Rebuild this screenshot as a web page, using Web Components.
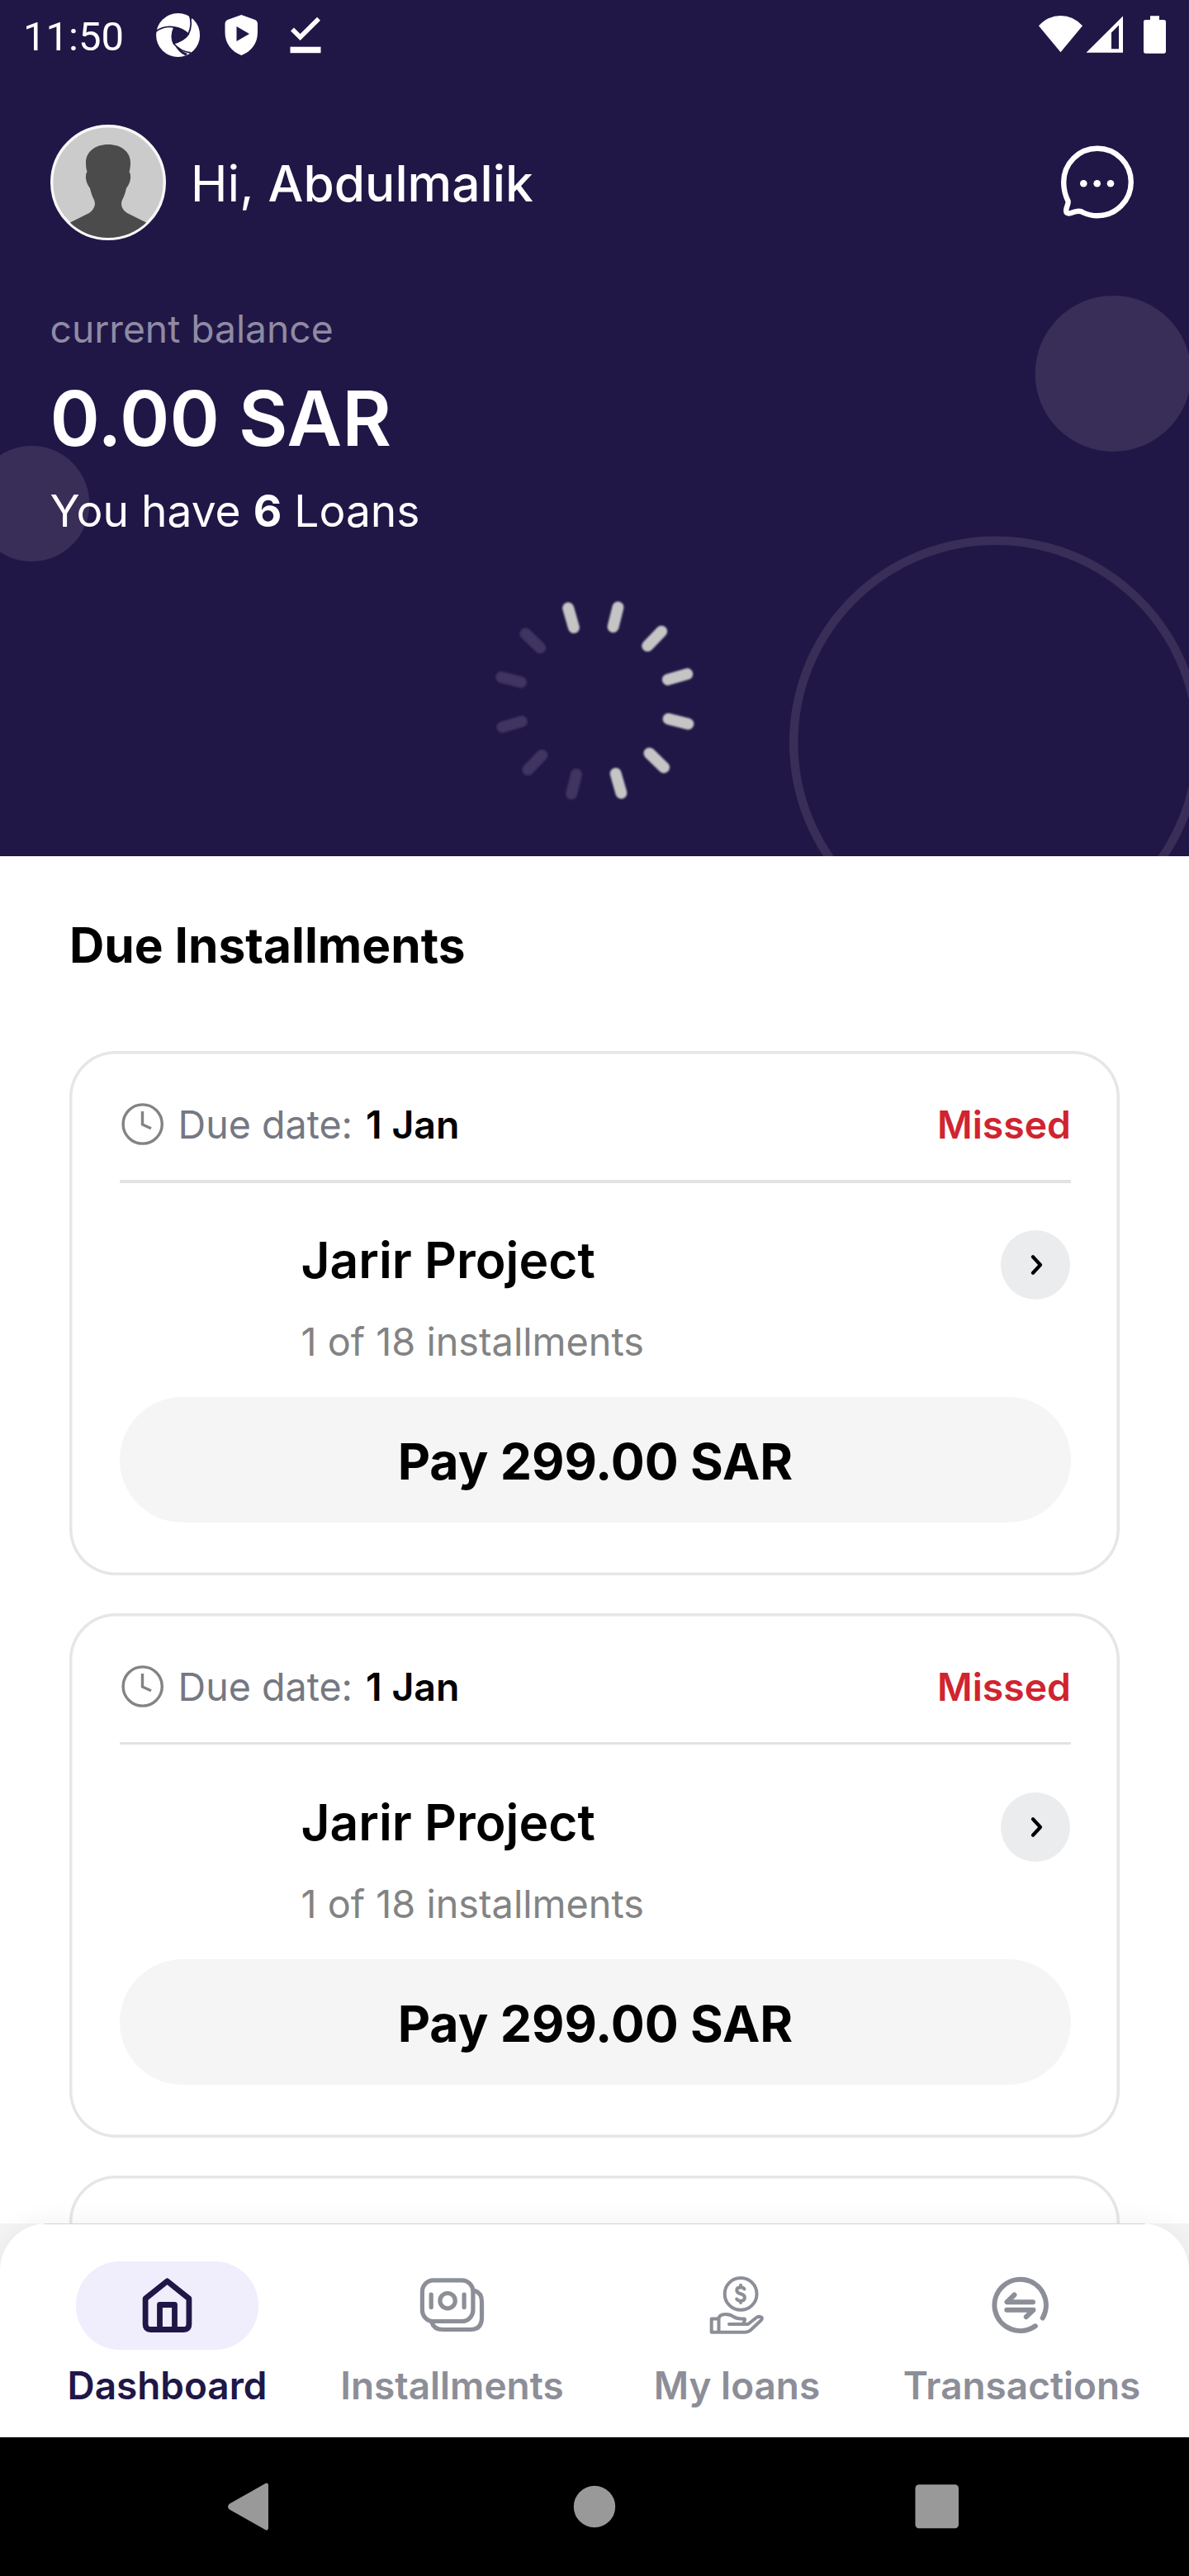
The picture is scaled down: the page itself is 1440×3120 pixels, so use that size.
<!DOCTYPE html>
<html lang="en">
<head>
<meta charset="utf-8">
<title>Dashboard</title>
<style>
html,body{margin:0;padding:0;background:#fff}
body{font-family:Inter,"Liberation Sans",sans-serif;color:#000}
</style>
</head>
<body>
<loan-app></loan-app>
<script>
const define = (name, html) => customElements.define(name, class extends HTMLElement {
  constructor() {
    super();
    const t = document.createElement('template');
    t.innerHTML = '<style>*{box-sizing:border-box}svg{display:block;flex:none}</style>' + html;
    this.attachShadow({ mode: 'open' }).appendChild(t.content.cloneNode(true));
  }
});

define('status-bar', `
<style>
:host{display:flex;height:84px;padding-left:28px;align-items:flex-start;color:#fff}
time{font:400 49px/90px Roboto,sans-serif;width:152px;white-space:nowrap}
.gap{flex:1}
</style>
<time>11:50</time>
<svg width="220" height="84" viewBox="180 0 220 84">
  <circle cx="215.6" cy="42.5" r="26.5" fill="#fff"/>
  <path d="M211 33 Q220 33 229 41 Q225 49 210.5 52.5 Q206 42 211 33Z" fill="#201747"/>
  <g fill="none" stroke="#201747" stroke-width="1.8">
    <path d="M188 38.5 Q199 30.5 211 33 Q222 35 228.5 42"/>
    <path d="M229 17 Q234 29 228 41.5"/>
    <path d="M211 33 Q206 44 210.5 53 Q218 62 231 64"/>
    <path d="M228.5 41 Q222 50 210 52.5"/>
  </g>
  <path d="M229 15 L232.5 21.5 L231.5 25Z M211 53 Q216 64 225 67.5 L227 65 Q217 61 211 53Z M230 64.2 L236 63 L233 67Z" fill="#201747"/>
  <path d="M292.3 18 L309 24 Q312 25.5 312 29 V39 C312 53 304 62.500 292.300 67 C280.500 62.500 272.500 53 272.500 39 V29 Q272.500 25.500 275.500 24Z" fill="#fff"/>
  <path d="M286.500 32 L302 41 L286.500 50Z" fill="#201747"/>
  <path d="M354 35.500 L363.600 45 L386 22.800" fill="none" stroke="#fff" stroke-width="5.600"/>
  <rect x="351.500" y="56.700" width="37" height="7.500" fill="#fff"/>
</svg>
<div class="gap"></div>
<svg width="190" height="84" viewBox="1250 0 190 84" fill="#fff">
  <path d="M1284.500 63.200 L1258 31.300 Q1269 19 1284.500 19 Q1300 19 1311 31.300Z"/>
  <path fill-rule="evenodd" d="M1315.500 63.700 L1360 19.500 V63.700Z M1346 39.500 V59.300 H1355 V30.500Z"/>
  <path d="M1393 19.300 H1404 V24 H1409.500 Q1412 24 1412 26.500 V62 Q1412 64.700 1409.500 64.700 H1387.500 Q1385 64.700 1385 62 V26.500 Q1385 24 1387.500 24 H1393Z"/>
</svg>`);

define('user-greeting', `
<style>
:host{display:flex;align-items:center;height:140px;margin:67px 60px 0 61px;color:#fff}
p{margin:2px 0 0 29.700px;font-size:60.400px;line-height:80px;flex:1;white-space:nowrap}
b{font-weight:500}
</style>
<svg width="140" height="140" viewBox="61 151 140 140">
  <defs><clipPath id="c"><circle cx="131" cy="221" r="67"/></clipPath></defs>
  <circle cx="131" cy="221" r="68.300" fill="#cbcbcb" stroke="#f7f7f7" stroke-width="3.400"/>
  <path clip-path="url(#c)" fill="#4b4b4b" d="M131 175 C115 175 104 184 104 197 Q104 204 105.500 208 Q103.500 210 104 216 Q104.500 222 109 228 Q110 233 112 238 Q115 243 115 247 Q114 254 108 258 Q98 263 84 270 V295 H178 V270 Q164 263 154 258 Q147.500 254 147 247 Q147 243 150 238 Q152 233 153 228 Q157.500 222 158 216 Q158.500 210 156.500 208 Q158 204 158 197 C158 184 147 175 131 175Z"/>
</svg>
<p>Hi, <b><slot></slot></b></p>
<svg width="95" height="95" viewBox="1285 173.500 95 95">
  <path d="M1293.500 243 C1290.500 237 1288.200 229 1288.200 220 A40.800 40.800 0 1 1 1329 260.800 C1322 260.800 1317 259.500 1312 257 C1308 254 1304 255 1300 256.500 C1295 258.500 1290.800 259 1291.200 254 C1291.500 250 1294.500 246 1293.500 243Z" fill="none" stroke="#fff" stroke-width="6.400" stroke-linejoin="round"/>
  <g fill="#fff"><circle cx="1312.300" cy="221.700" r="4.300"/><circle cx="1328.700" cy="221.700" r="4.300"/><circle cx="1345" cy="221.700" r="4.300"/></g>
</svg>`);

define('balance-summary', `
<style>
:host{display:block;margin:77px 60px 0 60.500px;color:#fff;white-space:nowrap}
p{margin:0}
.label{font-size:46.200px;line-height:60px;color:#8f8ba3}
.amount{font-size:91.600px;line-height:100px;font-weight:600;margin-top:29px}
.loans{font-size:53.300px;line-height:70px;margin-top:27px}
</style>
<p class="label">current balance</p>
<p class="amount">0.00 SAR</p>
<p class="loans">You have <b>6</b> Loans</p>`);

define('loading-spinner', `
<style>:host{display:flex;justify-content:center;margin-top:70px}g{filter:blur(.9px)}</style>
<svg width="250" height="250" viewBox="-125 -125 250 250"><g id="s"></g></svg>`);

define('dashboard-header', `
<style>
:host{display:block;position:relative;height:1037px;background:#201747;overflow:hidden}
.deco{position:absolute;left:0;top:0}
.front{position:relative}
</style>
<svg class="deco" width="1440" height="1037" viewBox="0 0 1440 1037">
  <g fill="#382e58"><circle cx="1348.200" cy="452.500" r="94.500"/><circle cx="38.300" cy="610" r="70"/></g>
  <circle cx="1206" cy="899.500" r="244.800" fill="none" stroke="#382e58" stroke-width="10.500"/>
</svg>
<div class="front">
  <status-bar></status-bar>
  <user-greeting>Abdulmalik</user-greeting>
  <balance-summary></balance-summary>
  <loading-spinner></loading-spinner>
</div>`);

define('installment-card', `
<style>
:host{display:block;height:635.250px;padding:50px 59px 0 61px;border-radius:56px;box-shadow:inset 0 0 0 3.500px #e6e6e6;white-space:nowrap}
:host([placeholder]) > *{display:none}
.due{display:flex;align-items:center;height:78px;font-size:46.600px;line-height:78px}
.due span{color:#757882;margin-left:16.500px}
.due b{font-weight:600;font-size:46.500px;margin-left:16px}
.due em{font-style:normal;font-weight:600;font-size:46.300px;color:#d02430;margin-left:auto}
hr{border:0;height:3.500px;margin:28px 0 0;background:#e3e3e3}
.body{display:flex;justify-content:space-between;align-items:flex-start;height:259.500px;padding:57.500px 1px 0 219.500px}
h3{margin:0;font-size:60.500px;line-height:72px;font-weight:600}
.body p{margin:33px 0 0;font-size:46.800px;line-height:60px;color:#838383}
button{display:block;width:100%;height:152px;padding:0;border:0;border-radius:76px;background:#f5f5f5;font:700 60.800px/156px Inter,sans-serif;color:#000}
</style>
<div class="due">
  <svg width="54" height="54" viewBox="145.500 1334.500 54 54" fill="none" stroke="#838383" stroke-width="3.400"><circle cx="173.200" cy="1361" r="23.600"/><path d="M173 1345.500 V1361.500 L183.500 1366.300"/></svg>
  <span>Due date:</span><b><slot name="date"></slot></b><em><slot name="status"></slot></em>
</div>
<hr>
<div class="body">
  <div><h3><slot name="title"></slot></h3><p><slot name="progress"></slot></p></div>
  <svg width="84" height="84" viewBox="1212 1490 84 84"><circle cx="1254" cy="1532" r="42" fill="#eaecee"/><path d="M1251 1522.300 L1260 1532 L1251 1541.700" fill="none" stroke="#000" stroke-width="4.200" stroke-linecap="round" stroke-linejoin="round"/></svg>
</div>
<button><slot name="pay"></slot></button>`);

define('due-installments', `
<style>
:host{display:block;height:1656px;overflow:hidden;padding:72px 84px 0;background:#fff}
h2{margin:0 0 92px;font-size:58.600px;line-height:72px;font-weight:700}
.list{display:flex;flex-direction:column;gap:45.500px}
</style>
<h2>Due Installments</h2>
<div class="list"><slot></slot></div>`);

define('tab-item', `
<style>
:host{display:flex;flex-direction:column;align-items:center;width:345px;padding-top:46px;color:#8c8e98}
.pill{display:flex;justify-content:center;width:221.500px;height:107px;border-radius:53px}
:host([selected]){color:#201747}
:host([selected]) .pill{background:#f0edfc}
.label{font-size:45.900px;font-weight:600;line-height:56px;margin-top:15.500px;white-space:nowrap}
</style>
<div class="pill"><slot name="icon"></slot></div>
<div class="label"><slot></slot></div>`);

define('tab-bar', `
<style>
:host{display:block;position:relative;z-index:1;height:259px;background:#f4f4f4}
nav{display:flex;height:259px;padding:0 30px;border-radius:57px 57px 0 0;background:linear-gradient(#d5d5d5,#d5d5d5) center top/1334px 1px no-repeat,#fff;box-shadow:0 0 34px rgba(0,0,0,.06)}
svg{fill:none;stroke:currentColor;stroke-linecap:round;stroke-linejoin:round}
</style>
<nav>
  <tab-item selected>
    <svg slot="icon" width="100" height="107" viewBox="152.500 2739 100 107" stroke-width="6.800"><path d="M202 2762.800 L175.600 2784 V2815 Q175.600 2821.500 182 2821.500 H222 Q228.400 2821.500 228.400 2815 V2784Z M193 2821 V2791.500 H211 V2821"/></svg>
    Dashboard
  </tab-item>
  <tab-item>
    <svg slot="icon" width="100" height="107" viewBox="497.500 2739 100 107" stroke-width="5.200"><rect x="510.900" y="2761.900" width="61.500" height="49.600" rx="13.500"/><path d="M574.500 2774.500 Q583 2777 583 2788 V2807 Q583 2821.500 569 2821.500 H536 Q525 2821.500 522.500 2813"/><circle cx="541.600" cy="2786.700" r="9.200"/><path d="M521.700 2779 V2794.500 M561.600 2779 V2794.500"/></svg>
    Installments
  </tab-item>
  <tab-item>
    <svg slot="icon" width="100" height="107" viewBox="842.500 2739 100 107" stroke-width="4"><circle cx="896.600" cy="2778.400" r="19.400"/><path d="M901 2772.500 Q900 2770.200 896.500 2770.200 Q891.800 2770.400 891.800 2774 Q891.800 2777 896.500 2778.300 Q901.400 2779.600 901.400 2783 Q901.400 2786.700 896.500 2786.800 Q892.800 2786.800 891.700 2784.500 M896.500 2767.800 V2770 M896.500 2787 V2789"/><path d="M870 2808.500 H861.200 V2824.800 H870 M870 2824.800 V2809 Q870 2803 878.500 2803 Q884 2803 888 2806 Q891.500 2808.400 897 2808.400 H900.500 Q902.500 2808.400 901 2811.500 L899.300 2815 M882.500 2815 H905.500 L915.500 2807 Q917.500 2805.500 920 2806 Q924 2807 921.500 2810 L908.500 2822.300 Q905.500 2824.800 902 2824.800 H870"/></svg>
    My loans
  </tab-item>
  <tab-item>
    <svg slot="icon" width="100" height="107" viewBox="1187.500 2739 100 107" stroke-width="6"><path d="M1262.200 2807.500 A31.200 31.200 0 1 0 1253.300 2817.300"/><path d="M1228 2779.500 L1219 2788.200 H1250.500 M1218.800 2797.800 H1251 L1242.300 2806.200"/></svg>
    Transactions
  </tab-item>
</nav>`);

define('system-navigation', `
<style>:host{display:block;height:168px;background:#000}</style>
<svg width="1440" height="168" viewBox="0 2952 1440 168" fill="#999">
  <path d="M320 3008.800 Q325 3005.500 325 3011 V3061 Q325 3066.500 320 3063.200 L278 3039.500 Q274 3036 278 3032.500Z"/>
  <circle cx="720" cy="3036" r="25.200"/><rect x="1108.500" y="3009.300" width="52.500" height="53" rx="4.500"/>
</svg>`);

const card = `<installment-card><span slot="date">1 Jan</span><span slot="status">Missed</span><span slot="title">Jarir Project</span><span slot="progress">1 of 18 installments</span><span slot="pay">Pay 299.00 SAR</span></installment-card>`;
define('loan-app', `
<style>:host{display:flex;flex-direction:column;width:1440px;height:3120px;overflow:hidden}</style>
<dashboard-header></dashboard-header>
<due-installments>${card}${card}<installment-card placeholder></installment-card></due-installments>
<tab-bar></tab-bar>
<system-navigation></system-navigation>`);

/* Twelve spokes, 30 degrees apart; the lit ones run from -16 to 164 degrees. */
const spinner = document.querySelector('loan-app').shadowRoot.querySelector('dashboard-header')
  .shadowRoot.querySelector('loading-spinner').shadowRoot.getElementById('s');
for (let i = 0; i < 12; i++) {
  const r = document.createElementNS('http://www.w3.org/2000/svg', 'rect');
  for (const [k, v] of Object.entries({ x: -7, y: -123.500, width: 14, height: 38.500, rx: 7,
    fill: i < 7 ? '#c5c5c5' : '#403461', transform: `translate(.3 -.5) rotate(${i * 30 - 16})` })) r.setAttribute(k, v);
  spinner.appendChild(r);
}
</script>
</body>
</html>
